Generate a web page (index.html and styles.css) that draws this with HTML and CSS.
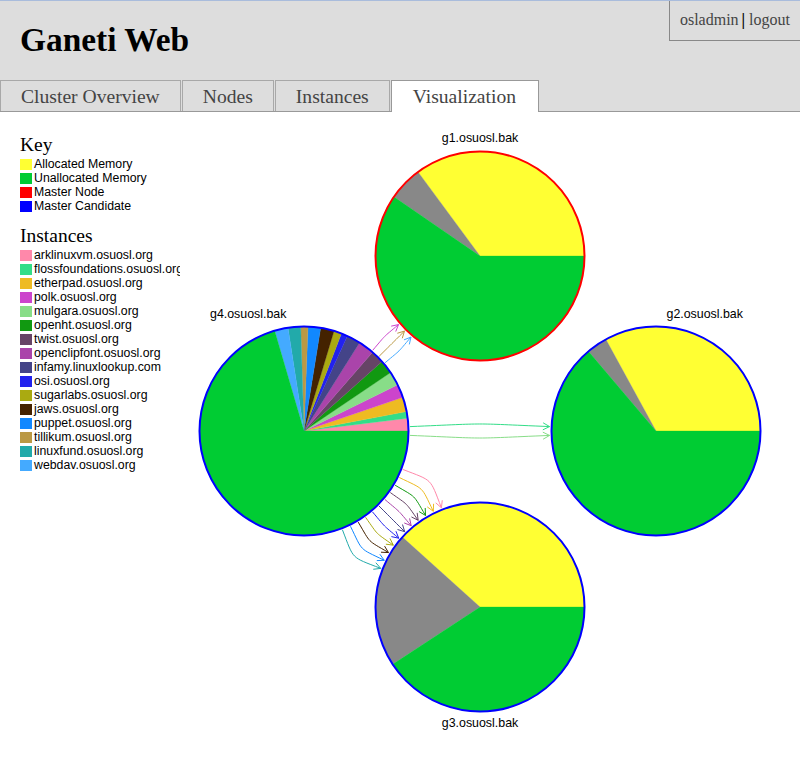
FILE: index.html
```html
<!DOCTYPE html>
<html lang="en">
<head>
<meta charset="utf-8">
<title>Ganeti Web - Visualization</title>
<link rel="stylesheet" href="styles.css">
</head>
<body>
<header class="masthead">
  <div class="topbar">
    <h1 class="brand">Ganeti Web</h1>
    <div class="userbox"><a class="userlink" href="#">osladmin</a><span class="sep">|</span> <a class="userlink" href="#">logout</a></div>
  </div>
  <nav class="tabs">
    <a class="tab" href="#">Cluster Overview</a>
    <a class="tab" href="#">Nodes</a>
    <a class="tab" href="#">Instances</a>
    <a class="tab tab-active" href="#">Visualization</a>
  </nav>
</header>
<main class="content">
  <aside class="legend">
    <h3 class="legend-title">Key</h3>
    <ul class="legend-list">
      <li class="legend-item"><span class="swatch sw-alloc"></span>Allocated Memory</li>
      <li class="legend-item"><span class="swatch sw-free"></span>Unallocated Memory</li>
      <li class="legend-item"><span class="swatch sw-master"></span>Master Node</li>
      <li class="legend-item"><span class="swatch sw-candidate"></span>Master Candidate</li>
    </ul>
    <h3 class="legend-title legend-title-2">Instances</h3>
    <ul class="legend-list">
      <li class="legend-item"><span class="swatch sw-ark"></span>arklinuxvm.osuosl.org</li>
      <li class="legend-item"><span class="swatch sw-floss"></span>flossfoundations.osuosl.org</li>
      <li class="legend-item"><span class="swatch sw-etherpad"></span>etherpad.osuosl.org</li>
      <li class="legend-item"><span class="swatch sw-polk"></span>polk.osuosl.org</li>
      <li class="legend-item"><span class="swatch sw-mulgara"></span>mulgara.osuosl.org</li>
      <li class="legend-item"><span class="swatch sw-openht"></span>openht.osuosl.org</li>
      <li class="legend-item"><span class="swatch sw-twist"></span>twist.osuosl.org</li>
      <li class="legend-item"><span class="swatch sw-openclip"></span>openclipfont.osuosl.org</li>
      <li class="legend-item"><span class="swatch sw-infamy"></span>infamy.linuxlookup.com</li>
      <li class="legend-item"><span class="swatch sw-osi"></span>osi.osuosl.org</li>
      <li class="legend-item"><span class="swatch sw-sugar"></span>sugarlabs.osuosl.org</li>
      <li class="legend-item"><span class="swatch sw-jaws"></span>jaws.osuosl.org</li>
      <li class="legend-item"><span class="swatch sw-puppet"></span>puppet.osuosl.org</li>
      <li class="legend-item"><span class="swatch sw-tillikum"></span>tillikum.osuosl.org</li>
      <li class="legend-item"><span class="swatch sw-linuxfund"></span>linuxfund.osuosl.org</li>
      <li class="legend-item"><span class="swatch sw-webdav"></span>webdav.osuosl.org</li>
    </ul>
  </aside>
  <svg class="viz" id="viz" xmlns="http://www.w3.org/2000/svg" width="620" height="645" viewBox="180 113 620 645">
    <g id="pies"></g>
    <g id="arrows"></g>
    <g class="node-labels">
      <text class="node-label" x="480" y="143" text-anchor="middle">g1.osuosl.bak</text>
      <text class="node-label" x="666.5" y="318.5">g2.osuosl.bak</text>
      <text class="node-label" x="480" y="728" text-anchor="middle">g3.osuosl.bak</text>
      <text class="node-label" x="210" y="318.5">g4.osuosl.bak</text>
    </g>
  </svg>
</main>
<script src="script.js"></script>
</body>
</html>
```

FILE: styles.css
```css
html, body {
  margin: 0;
  padding: 0;
  overflow: hidden;
  background: #ffffff;
}

body {
  font-family: "Liberation Serif", "Times New Roman", serif;
  color: #000000;
}

.masthead {
  background: #dddddd;
  border-top: 1px solid #a9bcdc;
}

.topbar {
  display: flex;
  justify-content: space-between;
  align-items: flex-start;
  height: 79px;
}

.brand {
  margin: 21px 0 0 0;
  padding-left: 20px;
  font-size: 33.4px;
  line-height: 36px;
  font-weight: bold;
  color: #000000;
}

.userbox {
  border-left: 1px solid #888888;
  border-bottom: 1px solid #888888;
  padding: 10px 10px 11px 10px;
  font-size: 16px;
  line-height: 18px;
  color: #444444;
  white-space: nowrap;
}

.userlink {
  color: #444444;
  text-decoration: none;
}

.sep {
  margin-left: 3px;
  font-weight: bold;
  color: #000000;
}

.tabs {
  display: flex;
  align-items: flex-end;
  border-bottom: 1px solid #999999;
  height: 31px;
}

.tab {
  display: block;
  border: 1px solid #a8a8a8;
  border-bottom: none;
  padding: 4px 20px 3px 20px;
  margin-right: 1px;
  font-size: 19.6px;
  line-height: 23px;
  color: #444444;
  text-decoration: none;
  background: #dddddd;
  white-space: nowrap;
}

.tab-active {
  background: #ffffff;
  border-color: #999999;
  margin-bottom: -1px;
  padding: 4px 22px 4px 21px;
}

.content {
  display: flex;
  align-items: flex-start;
}

.legend {
  flex: none;
  width: 180px;
  box-sizing: border-box;
  padding-left: 20px;
  padding-top: 21px;
  overflow: hidden;
}

.legend-title {
  margin: 0 0 1px 0;
  font-family: "Liberation Serif", "Times New Roman", serif;
  font-size: 19.5px;
  line-height: 23px;
  font-weight: normal;
}

.legend-title-2 {
  margin-top: 11px;
}

.legend-list {
  list-style: none;
  margin: 0;
  padding: 0;
}

.legend-item {
  display: flex;
  align-items: center;
  height: 14px;
  font-family: "Liberation Sans", Arial, sans-serif;
  font-size: 12.3px;
  line-height: 14px;
  white-space: nowrap;
}

.swatch {
  flex: none;
  width: 12px;
  height: 11px;
  margin-right: 2px;
}

.sw-alloc { background: #ffff33; }
.sw-free { background: #00cc33; }
.sw-master { background: #ff0000; }
.sw-candidate { background: #0000ff; }
.sw-ark { background: #ff88aa; }
.sw-floss { background: #33dd88; }
.sw-etherpad { background: #eebb22; }
.sw-polk { background: #cc44cc; }
.sw-mulgara { background: #88dd88; }
.sw-openht { background: #119911; }
.sw-twist { background: #664466; }
.sw-openclip { background: #aa44aa; }
.sw-infamy { background: #444488; }
.sw-osi { background: #2222ee; }
.sw-sugar { background: #aaaa11; }
.sw-jaws { background: #442200; }
.sw-puppet { background: #1188ff; }
.sw-tillikum { background: #bb9944; }
.sw-linuxfund { background: #22aaaa; }
.sw-webdav { background: #44aaff; }

.viz {
  display: block;
  flex: none;
}

.node-label {
  font-family: "Liberation Sans", Arial, sans-serif;
  font-size: 12.4px;
  fill: #000000;
}
```

FILE: script.js
```js
(function () {
  var NS = "http://www.w3.org/2000/svg";
  var gPies = document.getElementById("pies");
  var gArrows = document.getElementById("arrows");
  var R = 104.5;
  var C = { alloc: "#ffff33", free: "#00cc33", other: "#888888" };
  var I = {
    ark: "#ff88aa", floss: "#33dd88", etherpad: "#eebb22", polk: "#cc44cc",
    mulgara: "#88dd88", openht: "#119911", twist: "#664466", openclip: "#aa44aa",
    infamy: "#444488", osi: "#2222ee", sugar: "#aaaa11", jaws: "#442200",
    puppet: "#1188ff", tillikum: "#bb9944", linuxfund: "#22aaaa", webdav: "#44aaff"
  };
  var nodes = {
    g1: { x: 480, y: 257, stroke: "#ff0000",
      slices: [[126.4, C.alloc], [145.5, C.other], [360, C.free]] },
    g2: { x: 656, y: 432, stroke: "#0000ff",
      slices: [[118.7, C.alloc], [130.3, C.other], [360, C.free]] },
    g3: { x: 480, y: 608, stroke: "#0000ff",
      slices: [[138, C.alloc], [213.3, C.other], [360, C.free]] },
    g4: { x: 304, y: 432, stroke: "#0000ff",
      slices: [[7, I.ark], [10.7, I.floss], [18.8, I.etherpad], [26.2, I.polk],
        [34, I.mulgara], [41.6, I.openht], [49, I.twist], [57.8, I.openclip],
        [65.5, I.infamy], [69, I.osi], [73.3, I.sugar], [80.8, I.jaws],
        [87.8, I.puppet], [91.8, I.tillikum], [98.8, I.linuxfund], [106.3, I.webdav],
        [360, C.free]] }
  };

  function el(name, attrs, parent) {
    var e = document.createElementNS(NS, name);
    for (var k in attrs) e.setAttribute(k, attrs[k]);
    parent.appendChild(e);
    return e;
  }
  function f(v) { return v.toFixed(2); }
  var rad = Math.PI / 180;

  Object.keys(nodes).forEach(function (key) {
    var n = nodes[key];
    var a0 = 0;
    n.slices.forEach(function (s) {
      var a1 = s[0];
      var x0 = n.x + R * Math.cos(a0 * rad), y0 = n.y - R * Math.sin(a0 * rad);
      var x1 = n.x + R * Math.cos(a1 * rad), y1 = n.y - R * Math.sin(a1 * rad);
      var large = (a1 - a0) > 180 ? 1 : 0;
      el("path", {
        d: "M" + n.x + " " + n.y + " L" + f(x0) + " " + f(y0) +
          " A" + R + " " + R + " 0 " + large + " 0 " + f(x1) + " " + f(y1) + " Z",
        fill: s[1], stroke: s[1], "stroke-width": "0.3"
      }, gPies);
      a0 = a1;
    });
    el("circle", { cx: n.x, cy: n.y, r: R, fill: "none", stroke: n.stroke, "stroke-width": "2" }, gPies);
  });

  var STEP = 4.75;
  var moves = [
    ["g4", "g1", [I.polk, I.tillikum, I.webdav]],
    ["g4", "g2", [I.floss, I.mulgara]],
    ["g4", "g3", [I.ark, I.etherpad, I.openht, I.twist, I.openclip, I.infamy,
      I.osi, I.sugar, I.jaws, I.puppet, I.linuxfund]]
  ];

  moves.forEach(function (m) {
    var s = nodes[m[0]], t = nodes[m[1]], cols = m[2];
    var phi = Math.atan2(t.y - s.y, t.x - s.x) / rad;
    cols.forEach(function (col, i) {
      var off = (i - (cols.length - 1) / 2) * STEP;
      var ts = phi + off;
      var te = 2 * phi + 180 - ts;
      var u0x = Math.cos(ts * rad), u0y = Math.sin(ts * rad);
      var u3x = -Math.cos(te * rad), u3y = -Math.sin(te * rad);
      var p0x = s.x + (R + 1.5) * u0x, p0y = s.y + (R + 1.5) * u0y;
      var p3x = t.x - (R + 2) * u3x, p3y = t.y - (R + 2) * u3y;
      var chord = Math.hypot(p3x - p0x, p3y - p0y);
      var d = chord * 0.6;
      var p1x = p0x + d * u0x, p1y = p0y + d * u0y;
      var p2x = p3x - d * u3x, p2y = p3y - d * u3y;
      el("path", {
        d: "M" + f(p0x) + " " + f(p0y) + " C" + f(p1x) + " " + f(p1y) + " " +
          f(p2x) + " " + f(p2y) + " " + f(p3x) + " " + f(p3y),
        fill: "none", stroke: col, "stroke-width": "1"
      }, gArrows);
      var ang = Math.atan2(u3y, u3x);
      var h = 7.5, spread = 28 * rad;
      var hx1 = p3x - h * Math.cos(ang + spread), hy1 = p3y - h * Math.sin(ang + spread);
      var hx2 = p3x - h * Math.cos(ang - spread), hy2 = p3y - h * Math.sin(ang - spread);
      el("path", {
        d: "M" + f(hx1) + " " + f(hy1) + " L" + f(p3x) + " " + f(p3y) + " L" + f(hx2) + " " + f(hy2),
        fill: "none", stroke: col, "stroke-width": "1"
      }, gArrows);
    });
  });
})();
```
